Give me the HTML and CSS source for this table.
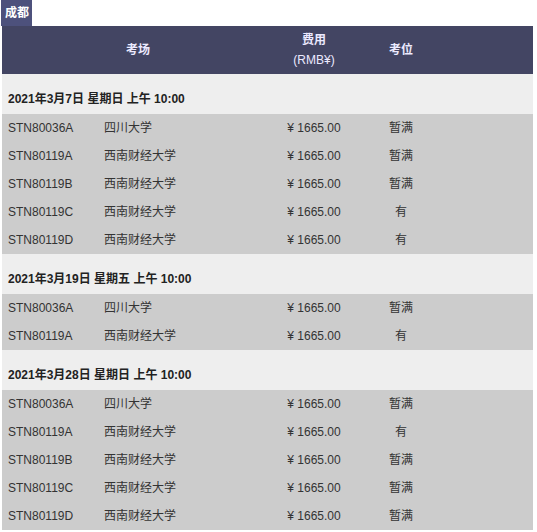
FILE: index.html
```html
<!DOCTYPE html>
<html lang="zh-CN">
<head>
<meta charset="utf-8">
<title>成都</title>
<link rel="stylesheet" href="styles.css">
</head>
<body>
<div class="city"><span class="city-tab">成都</span></div>
<table class="exam">
  <colgroup>
    <col class="c-code"><col class="c-venue"><col class="c-fee"><col class="c-seat"><col class="c-rest">
  </colgroup>
  <thead>
    <tr>
      <th colspan="2">考场</th>
      <th>费用<br><span class="unit">(RMB¥)</span></th>
      <th>考位</th>
      <th></th>
    </tr>
  </thead>
  <tbody>
    <tr class="date"><td colspan="5">2021年3月7日 星期日 上午 10:00</td></tr>
    <tr><td>STN80036A</td><td>四川大学</td><td class="fee">¥ 1665.00</td><td class="seat">暂满</td><td></td></tr>
    <tr><td>STN80119A</td><td>西南财经大学</td><td class="fee">¥ 1665.00</td><td class="seat">暂满</td><td></td></tr>
    <tr><td>STN80119B</td><td>西南财经大学</td><td class="fee">¥ 1665.00</td><td class="seat">暂满</td><td></td></tr>
    <tr><td>STN80119C</td><td>西南财经大学</td><td class="fee">¥ 1665.00</td><td class="seat">有</td><td></td></tr>
    <tr><td>STN80119D</td><td>西南财经大学</td><td class="fee">¥ 1665.00</td><td class="seat">有</td><td></td></tr>
    <tr class="date"><td colspan="5">2021年3月19日 星期五 上午 10:00</td></tr>
    <tr><td>STN80036A</td><td>四川大学</td><td class="fee">¥ 1665.00</td><td class="seat">暂满</td><td></td></tr>
    <tr><td>STN80119A</td><td>西南财经大学</td><td class="fee">¥ 1665.00</td><td class="seat">有</td><td></td></tr>
    <tr class="date"><td colspan="5">2021年3月28日 星期日 上午 10:00</td></tr>
    <tr><td>STN80036A</td><td>四川大学</td><td class="fee">¥ 1665.00</td><td class="seat">暂满</td><td></td></tr>
    <tr><td>STN80119A</td><td>西南财经大学</td><td class="fee">¥ 1665.00</td><td class="seat">有</td><td></td></tr>
    <tr><td>STN80119B</td><td>西南财经大学</td><td class="fee">¥ 1665.00</td><td class="seat">暂满</td><td></td></tr>
    <tr><td>STN80119C</td><td>西南财经大学</td><td class="fee">¥ 1665.00</td><td class="seat">暂满</td><td></td></tr>
    <tr><td>STN80119D</td><td>西南财经大学</td><td class="fee">¥ 1665.00</td><td class="seat">暂满</td><td></td></tr>
  </tbody>
</table>
</body>
</html>
```

FILE: styles.css
```css
html, body {
  margin: 0;
  padding: 0;
  background: #fff;
}
body {
  font-family: "Liberation Sans", Arial, "Noto Sans CJK SC", sans-serif;
  font-size: 12px;
  color: #333;
}
.city {
  padding-left: 1px;
  height: 26px;
}
.city-tab {
  display: inline-block;
  height: 26px;
  line-height: 26px;
  padding: 0 3px 0 4px;
  background: #4d517c;
  color: #fff;
  font-weight: bold;
}
.exam {
  margin-left: 2px;
  width: 531px;
  border-collapse: collapse;
  table-layout: fixed;
}
.c-code { width: 96px; }
.c-venue { width: 176px; }
.c-fee { width: 80px; }
.c-seat { width: 94px; }
.c-rest { width: auto; }
.exam th {
  background: #434563;
  color: #eceaff;
  font-weight: bold;
  height: 48px;
  padding: 0;
  line-height: 20px;
  text-align: center;
  vertical-align: middle;
}
.exam th .unit {
  font-weight: normal;
}
.exam td {
  background: #cccccc;
  height: 28px;
  padding: 0 6px;
  line-height: 16px;
  vertical-align: middle;
  white-space: nowrap;
}
.exam td.fee,
.exam td.seat {
  text-align: center;
  padding: 0;
}
.exam tr.date td {
  background: #eeeeee;
  height: 16px;
  padding: 17px 6px 7px;
  font-weight: bold;
  color: #222;
}
```
